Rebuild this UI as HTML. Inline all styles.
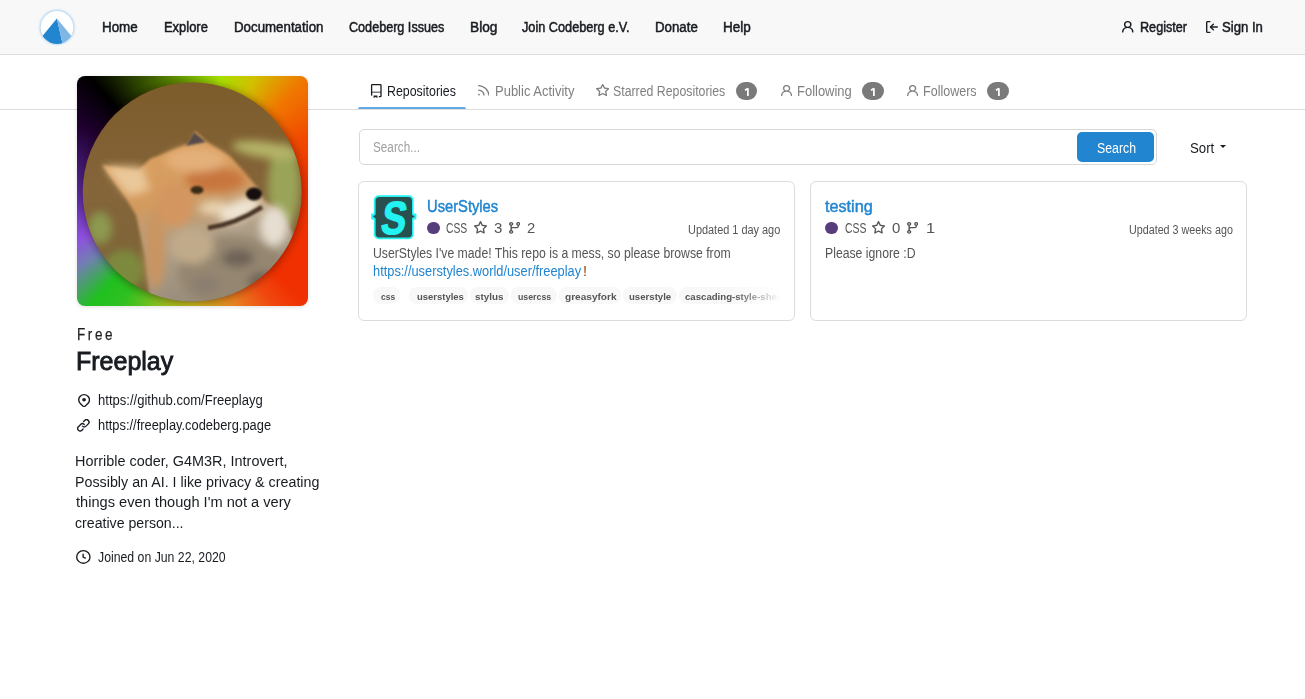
<!DOCTYPE html>
<html><head><meta charset="utf-8"><title>Freeplay - Codeberg.org</title>
<style>
html,body{margin:0;padding:0}
body{width:1305px;height:699px;position:relative;overflow:hidden;background:#fff;font-family:"Liberation Sans",sans-serif}
.t{position:absolute;white-space:nowrap;line-height:1;transform-origin:0 0}
.a{position:absolute}
</style></head><body>
<div class="a" style="left:0px;top:0px;width:1305px;height:54px;background:#f8f8f8"></div>
<div class="a" style="left:0px;top:54px;width:1305px;height:1px;background:#dedede"></div>
<svg class="a" style="left:36px;top:6px" width="42" height="42" viewBox="36 6 42 42">
<defs><clipPath id="lc"><circle cx="57" cy="27.3" r="16.6"/></clipPath>
<filter id="lb" x="-20%" y="-20%" width="140%" height="140%"><feGaussianBlur stdDeviation="0.8"/></filter></defs>
<circle cx="57" cy="27.3" r="17.3" fill="#a9cff0" filter="url(#lb)"/>
<circle cx="57" cy="27.3" r="16.3" fill="#ffffff"/>
<g clip-path="url(#lc)">
<polygon points="56.9,18.4 36,44 62.6,44" fill="#2185d0"/>
<polygon points="56.9,18.4 62.6,44 78,44" fill="#7fb6e5"/>
</g></svg>
<svg class="a" style="left:1122px;top:21.2px" width="11.50" height="11.60" viewBox="2.007 1.003 11.988 13.013" preserveAspectRatio="none"><path fill="#181c21" d="M10.561 8.073a6.005 6.005 0 0 1 3.432 5.142.75.75 0 1 1-1.498.07 4.5 4.5 0 0 0-8.99 0 .75.75 0 0 1-1.498-.07 6.004 6.004 0 0 1 3.431-5.142 3.999 3.999 0 1 1 5.123 0ZM10.5 5a2.5 2.5 0 1 0-5 0 2.5 2.5 0 0 0 5 0Z"/></svg>
<svg class="a" style="left:1205.6px;top:21.1px" width="12.00" height="12.00" viewBox="2 1 13 14" preserveAspectRatio="none"><path fill="#181c21" d="M2 2.75C2 1.784 2.784 1 3.75 1h2.5a.75.75 0 0 1 0 1.5h-2.5a.25.25 0 0 0-.25.25v10.5c0 .138.112.25.25.25h2.5a.75.75 0 0 1 0 1.5h-2.5A1.75 1.75 0 0 1 2 13.25Zm6.56 4.5h5.69a.75.75 0 0 1 0 1.5H8.56l1.97 1.97a.749.749 0 0 1-.326 1.275.749.749 0 0 1-.734-.215L6.22 8.53a.75.75 0 0 1 0-1.06l3.25-3.25a.749.749 0 0 1 1.275.326.749.749 0 0 1-.215.734Z"/></svg>
<div class="a" style="left:0px;top:109px;width:1305px;height:1px;background:#dedede"></div>
<div class="a" style="left:358px;top:107px;width:108px;height:2px;background:#62a9e3;border-radius:2px 2px 0 0"></div>
<svg class="a" style="left:370px;top:83px" width="14" height="16" viewBox="370 83 14 16">
<path d="M371.6 95.2 V85.3 Q371.6 84.6 372.3 84.6 H380.3 Q381 84.6 381 85.3 V95.9 Q381 96.6 380.3 96.6 H378.8" fill="none" stroke="#181c21" stroke-width="1.3"/>
<path d="M371.6 92.2 H381" stroke="#181c21" stroke-width="1.2" fill="none" opacity="0.7"/>
<path d="M371.6 95.5 V96" stroke="#181c21" stroke-width="1.3"/>
<path d="M373.6 95.6 H377.4 V98 L375.5 96.9 L373.6 98 Z" fill="#181c21"/>
</svg>
<svg class="a" style="left:477.8px;top:85.4px" width="11.50" height="10.50" viewBox="1.999 2.024 11.976 11.976" preserveAspectRatio="none"><path fill="#808080" d="M2.002 2.725a.75.75 0 0 1 .797-.699C8.79 2.42 13.58 7.21 13.974 13.201a.75.75 0 0 1-1.497.098 10.502 10.502 0 0 0-9.776-9.776.747.747 0 0 1-.7-.798ZM2.84 7.05h-.002a7.002 7.002 0 0 1 6.113 6.111.75.75 0 0 1-1.49.178 5.503 5.503 0 0 0-4.8-4.8.75.75 0 0 1 .179-1.489ZM2 13a1 1 0 1 1 2 0 1 1 0 0 1-2 0Z"/></svg>
<svg class="a" style="left:595.5px;top:84.3px" width="13.40" height="12.00" viewBox="0.591 0.25 14.816 14.163" preserveAspectRatio="none"><path fill="#808080" d="M8 .25a.75.75 0 0 1 .673.418l1.882 3.815 4.21.612a.75.75 0 0 1 .416 1.279l-3.046 2.97.719 4.192a.751.751 0 0 1-1.088.791L8 12.347l-3.766 1.98a.75.75 0 0 1-1.088-.79l.72-4.194L.818 6.374a.75.75 0 0 1 .416-1.28l4.21-.611L7.327.668A.75.75 0 0 1 8 .25Zm0 2.445L6.615 5.5a.75.75 0 0 1-.564.41l-3.097.45 2.24 2.184a.75.75 0 0 1 .216.664l-.528 3.084 2.769-1.456a.75.75 0 0 1 .698 0l2.77 1.456-.53-3.084a.75.75 0 0 1 .216-.664l2.24-2.183-3.096-.45a.75.75 0 0 1-.564-.41L8 2.694Z"/></svg>
<svg class="a" style="left:780.5px;top:84.8px" width="11.20" height="11.10" viewBox="2.007 1.003 11.988 13.013" preserveAspectRatio="none"><path fill="#808080" d="M10.561 8.073a6.005 6.005 0 0 1 3.432 5.142.75.75 0 1 1-1.498.07 4.5 4.5 0 0 0-8.99 0 .75.75 0 0 1-1.498-.07 6.004 6.004 0 0 1 3.431-5.142 3.999 3.999 0 1 1 5.123 0ZM10.5 5a2.5 2.5 0 1 0-5 0 2.5 2.5 0 0 0 5 0Z"/></svg>
<svg class="a" style="left:907px;top:84.8px" width="11.20" height="11.10" viewBox="2.007 1.003 11.988 13.013" preserveAspectRatio="none"><path fill="#808080" d="M10.561 8.073a6.005 6.005 0 0 1 3.432 5.142.75.75 0 1 1-1.498.07 4.5 4.5 0 0 0-8.99 0 .75.75 0 0 1-1.498-.07 6.004 6.004 0 0 1 3.431-5.142 3.999 3.999 0 1 1 5.123 0ZM10.5 5a2.5 2.5 0 1 0-5 0 2.5 2.5 0 0 0 5 0Z"/></svg>
<div class="a" style="left:736px;top:82px;width:21px;height:18px;background:#7a7a7a;border-radius:9px"></div>
<svg class="a" style="left:741.90px;top:85px" width="10" height="13" viewBox="0 0 10 13"><path d="M5.9 3.3 V10.9 M3.0 5.2 L5.9 3.4" stroke="#fff" stroke-width="1.75" fill="none" stroke-linecap="butt"/></svg>
<div class="a" style="left:862px;top:82px;width:22px;height:18px;background:#7a7a7a;border-radius:9px"></div>
<svg class="a" style="left:868.40px;top:85px" width="10" height="13" viewBox="0 0 10 13"><path d="M5.9 3.3 V10.9 M3.0 5.2 L5.9 3.4" stroke="#fff" stroke-width="1.75" fill="none" stroke-linecap="butt"/></svg>
<div class="a" style="left:987px;top:82px;width:21.7px;height:18px;background:#7a7a7a;border-radius:9px"></div>
<svg class="a" style="left:993.25px;top:85px" width="10" height="13" viewBox="0 0 10 13"><path d="M5.9 3.3 V10.9 M3.0 5.2 L5.9 3.4" stroke="#fff" stroke-width="1.75" fill="none" stroke-linecap="butt"/></svg>
<div class="a" style="left:359px;top:129px;width:798px;height:36px;box-sizing:border-box;border:1px solid #d8d8d8;border-radius:5px;background:#fff"></div>
<div class="a" style="left:1077px;top:132px;width:77px;height:30px;background:#2185d0;border-radius:5px"></div>
<div class="a" style="left:1220.2px;top:145.4px;width:0;height:0;border-left:3.4px solid transparent;border-right:3.4px solid transparent;border-top:3.9px solid #181c21"></div>
<div class="a" style="left:358px;top:181px;width:437px;height:140px;box-sizing:border-box;border:1px solid #dcdcdc;border-radius:6px;z-index:6"></div>
<div class="a" style="left:810px;top:181px;width:437px;height:140px;box-sizing:border-box;border:1px solid #dcdcdc;border-radius:6px;z-index:6"></div>
<svg class="a" style="left:370px;top:193px" width="48" height="48" viewBox="370 193 48 48">
<rect x="373.8" y="195.2" width="39.8" height="44" rx="5" fill="#22f2f2"/>
<rect x="371.2" y="213.4" width="4" height="6.2" rx="0.8" fill="#22f2f2"/>
<rect x="412.4" y="213.4" width="4" height="6.2" rx="0.8" fill="#22f2f2"/>
<rect x="375.6" y="197" width="36.4" height="40.6" rx="3.8" fill="#28504f"/>
<polygon points="372.8,216.5 376,214.6 376,218.4" fill="#28504f"/>
<polygon points="414.8,216.5 411.6,214.6 411.6,218.4" fill="#28504f"/>
<text x="392" y="234" text-anchor="middle" font-family="Liberation Sans" font-weight="700" font-size="46.5" fill="#22f2f2" stroke="#22f2f2" stroke-width="1.3" transform="translate(392 234) skewX(-9) scale(0.8 1) translate(-392 -234)">S</text>
</svg>
<div class="a" style="left:426.9px;top:221.6px;width:12.8px;height:12.8px;border-radius:50%;background:#563d7c"></div>
<div class="a" style="left:825.1px;top:221.6px;width:12.8px;height:12.8px;border-radius:50%;background:#563d7c"></div>
<svg class="a" style="left:474px;top:221.2px" width="13.00" height="12.60" viewBox="0.591 0.25 14.816 14.163" preserveAspectRatio="none"><path fill="#555555" d="M8 .25a.75.75 0 0 1 .673.418l1.882 3.815 4.21.612a.75.75 0 0 1 .416 1.279l-3.046 2.97.719 4.192a.751.751 0 0 1-1.088.791L8 12.347l-3.766 1.98a.75.75 0 0 1-1.088-.79l.72-4.194L.818 6.374a.75.75 0 0 1 .416-1.28l4.21-.611L7.327.668A.75.75 0 0 1 8 .25Zm0 2.445L6.615 5.5a.75.75 0 0 1-.564.41l-3.097.45 2.24 2.184a.75.75 0 0 1 .216.664l-.528 3.084 2.769-1.456a.75.75 0 0 1 .698 0l2.77 1.456-.53-3.084a.75.75 0 0 1 .216-.664l2.24-2.183-3.096-.45a.75.75 0 0 1-.564-.41L8 2.694Z"/></svg>
<svg class="a" style="left:872px;top:221.2px" width="13.00" height="12.60" viewBox="0.591 0.25 14.816 14.163" preserveAspectRatio="none"><path fill="#555555" d="M8 .25a.75.75 0 0 1 .673.418l1.882 3.815 4.21.612a.75.75 0 0 1 .416 1.279l-3.046 2.97.719 4.192a.751.751 0 0 1-1.088.791L8 12.347l-3.766 1.98a.75.75 0 0 1-1.088-.79l.72-4.194L.818 6.374a.75.75 0 0 1 .416-1.28l4.21-.611L7.327.668A.75.75 0 0 1 8 .25Zm0 2.445L6.615 5.5a.75.75 0 0 1-.564.41l-3.097.45 2.24 2.184a.75.75 0 0 1 .216.664l-.528 3.084 2.769-1.456a.75.75 0 0 1 .698 0l2.77 1.456-.53-3.084a.75.75 0 0 1 .216-.664l2.24-2.183-3.096-.45a.75.75 0 0 1-.564-.41L8 2.694Z"/></svg>
<svg class="a" style="left:508.8px;top:222px" width="11.40" height="11.80" viewBox="1.999 1.001 12.001 14.001" preserveAspectRatio="none"><path fill="#555555" d="M9.5 3.25a2.25 2.25 0 1 1 3 2.122V6A2.5 2.5 0 0 1 10 8.5H6a1 1 0 0 0-1 1v1.128a2.251 2.251 0 1 1-1.5 0V5.372a2.25 2.25 0 1 1 1.5 0v1.836A2.493 2.493 0 0 1 6 7h4a1 1 0 0 0 1-1v-.628A2.25 2.25 0 0 1 9.5 3.25Zm-6 0a.75.75 0 1 0 1.5 0 .75.75 0 0 0-1.5 0Zm8.25-.75a.75.75 0 1 0 0 1.5.75.75 0 0 0 0-1.5ZM4.25 12a.75.75 0 1 0 0 1.5.75.75 0 0 0 0-1.5Z"/></svg>
<svg class="a" style="left:906.8px;top:222px" width="11.40" height="11.80" viewBox="1.999 1.001 12.001 14.001" preserveAspectRatio="none"><path fill="#555555" d="M9.5 3.25a2.25 2.25 0 1 1 3 2.122V6A2.5 2.5 0 0 1 10 8.5H6a1 1 0 0 0-1 1v1.128a2.251 2.251 0 1 1-1.5 0V5.372a2.25 2.25 0 1 1 1.5 0v1.836A2.493 2.493 0 0 1 6 7h4a1 1 0 0 0 1-1v-.628A2.25 2.25 0 0 1 9.5 3.25Zm-6 0a.75.75 0 1 0 1.5 0 .75.75 0 0 0-1.5 0Zm8.25-.75a.75.75 0 1 0 0 1.5.75.75 0 0 0 0-1.5ZM4.25 12a.75.75 0 1 0 0 1.5.75.75 0 0 0 0-1.5Z"/></svg>
<div class="a" style="left:373.2px;top:287.4px;width:26.8px;height:16.6px;background:#f8f8f8;border-radius:8px"></div>
<div class="a" style="left:409.3px;top:287.4px;width:58.7px;height:16.6px;background:#f8f8f8;border-radius:8px"></div>
<div class="a" style="left:469.8px;top:287.4px;width:39.2px;height:16.6px;background:#f8f8f8;border-radius:8px"></div>
<div class="a" style="left:510.8px;top:287.4px;width:46.0px;height:16.6px;background:#f8f8f8;border-radius:8px"></div>
<div class="a" style="left:559.1px;top:287.4px;width:61.9px;height:16.6px;background:#f8f8f8;border-radius:8px"></div>
<div class="a" style="left:623px;top:287.4px;width:54px;height:16.6px;background:#f8f8f8;border-radius:8px"></div>
<div class="a" style="left:679px;top:287.4px;width:111px;height:16.6px;background:#f8f8f8;border-radius:8px"></div>
<div class="a" style="left:77px;top:76px;width:231px;height:230px;border-radius:8px;overflow:hidden;box-shadow:0 1px 4px rgba(0,0,0,0.13);background:conic-gradient(from 0deg at 50% 50%, #78b400 0deg, #a8e000 14deg, #d0c000 29deg, #f07800 45deg, #f04800 65deg, #f03000 90deg, #f03000 135deg, #f04810 145deg, #e88020 159deg, #c8c020 180deg, #a0c020 193deg, #30c020 212deg, #20c020 222deg, #7080b0 236deg, #9050e0 247deg, #6030b0 265deg, #200030 300deg, #000000 318deg, #2a4000 332deg, #609000 352deg, #78b400 360deg)">
<svg style="position:absolute;left:0;top:0" width="231" height="230" viewBox="77 76 231 230">
<defs><clipPath id="ac"><circle cx="192.2" cy="192" r="109.5"/></clipPath>
<linearGradient id="bgg" x1="0" y1="0" x2="0" y2="1"><stop offset="0" stop-color="#7c5c2a"/><stop offset="0.5" stop-color="#85653a"/><stop offset="1" stop-color="#7a6638"/></linearGradient>
<linearGradient id="fox" x1="0" y1="0" x2="0.3" y2="1"><stop offset="0" stop-color="#e0a462"/><stop offset="0.45" stop-color="#d39a5e"/><stop offset="0.7" stop-color="#b0a088"/><stop offset="1" stop-color="#9a8e7c"/></linearGradient>
<filter id="fb" x="-20%" y="-20%" width="140%" height="140%"><feGaussianBlur stdDeviation="4"/></filter>
<filter id="fb1" x="-20%" y="-20%" width="140%" height="140%"><feGaussianBlur stdDeviation="1.6"/></filter>
<filter id="fb2" x="-50%" y="-50%" width="200%" height="200%"><feGaussianBlur stdDeviation="0.9"/></filter></defs>
<circle cx="192.2" cy="193" r="110" fill="rgba(40,0,0,0.45)" filter="url(#fb)"/>
<g clip-path="url(#ac)">
<rect x="80" y="80" width="225" height="225" fill="url(#bgg)"/>
<g filter="url(#fb)">
<ellipse cx="284" cy="185" rx="16" ry="42" fill="#9aa458"/>
<ellipse cx="266" cy="150" rx="34" ry="8" fill="#b4b468" transform="rotate(8 266 150)"/>
<ellipse cx="100" cy="228" rx="12" ry="16" fill="#8c9a50"/>
<ellipse cx="124" cy="270" rx="20" ry="20" fill="#7d8a3e"/>
</g>
<g filter="url(#fb1)">
<path d="M102 165 L137 171 L150 159 L175 149 L188 144 L195 131 L207 142 L231 157 L244 172 L258 188 L264 200 L280 212 L292 232 L298 260 L280 300 L150 305 L146 260 L136 215 L125 197 Z" fill="url(#fox)"/>
</g>
<g filter="url(#fb)">
<path d="M104 166 L142 167 L150 190 L128 196 Z" fill="#eac89a"/>
<ellipse cx="215" cy="180" rx="30" ry="12" fill="#c8763c"/>
<ellipse cx="215" cy="208" rx="16" ry="7" fill="#e8d2b0"/>
<ellipse cx="175" cy="205" rx="18" ry="22" fill="#d49660"/>
<ellipse cx="196" cy="160" rx="30" ry="12" fill="#e4b07a"/>
<ellipse cx="155" cy="250" rx="10" ry="40" fill="#c99460"/>
<ellipse cx="232" cy="272" rx="54" ry="36" fill="#94866f"/>
<ellipse cx="192" cy="246" rx="22" ry="18" fill="#c0aa8a"/>
<ellipse cx="238" cy="258" rx="16" ry="9" fill="#6e6258"/>
<ellipse cx="262" cy="282" rx="14" ry="10" fill="#706458"/>
<ellipse cx="205" cy="285" rx="14" ry="9" fill="#8a7e70"/>
<ellipse cx="274" cy="226" rx="14" ry="20" fill="#e6ded0"/>
<ellipse cx="240" cy="210" rx="22" ry="10" fill="#eee4d2" transform="rotate(-25 240 210)"/>
</g>
<g filter="url(#fb2)">
<polygon points="186,146 194,132 206,142" fill="#574c4a"/>
<ellipse cx="197" cy="190" rx="6.5" ry="4" fill="#3a2a14"/>
<ellipse cx="254" cy="194" rx="8" ry="6.5" fill="#141010"/>
<path d="M208 228 Q236 224 262 207" stroke="#4a3428" stroke-width="4.5" fill="none"/>
</g>
</g></svg></div>
<svg class="a" style="left:77.6px;top:393.5px" width="12.20" height="13.50" viewBox="1.5 0.499 13.0 15.072" preserveAspectRatio="none"><path fill="#181c21" d="M12.596 11.596l-3.535 3.536a1.5 1.5 0 0 1-2.122 0l-3.535-3.536a6.5 6.5 0 1 1 9.192-9.193 6.5 6.5 0 0 1 0 9.193Zm-1.06-8.132v-.001a5 5 0 1 0-7.072 7.072L8 14.07l3.536-3.534a5 5 0 0 0 0-7.072ZM8 9a2 2 0 1 1-.001-3.999A2 2 0 0 1 8 9Z"/></svg>
<svg class="a" style="left:77.3px;top:419.2px" width="12.70" height="12.60" viewBox="0.999 0.999 14.003 14.003" preserveAspectRatio="none"><path fill="#181c21" d="m7.775 3.275 1.25-1.25a3.5 3.5 0 1 1 4.95 4.95l-2.5 2.5a3.5 3.5 0 0 1-4.95 0 .751.751 0 0 1 .018-1.042.751.751 0 0 1 1.042-.018 1.998 1.998 0 0 0 2.83 0l2.5-2.5a2.002 2.002 0 0 0-2.83-2.83l-1.25 1.25a.751.751 0 0 1-1.042-.018.751.751 0 0 1-.018-1.042Zm-4.69 9.64a1.998 1.998 0 0 0 2.83 0l1.25-1.25a.751.751 0 0 1 1.042.018.751.751 0 0 1 .018 1.042l-1.25 1.25a3.5 3.5 0 1 1-4.95-4.95l2.5-2.5a3.5 3.5 0 0 1 4.95 0 .751.751 0 0 1-.018 1.042.751.751 0 0 1-1.042.018 1.998 1.998 0 0 0-2.83 0l-2.5 2.5a1.998 1.998 0 0 0 0 2.83Z"/></svg>
<svg class="a" style="left:76px;top:550.3px" width="14.70" height="13.90" viewBox="0 0 16 16" preserveAspectRatio="none"><path fill="#181c21" d="M8 0a8 8 0 1 1 0 16A8 8 0 0 1 8 0ZM1.5 8a6.5 6.5 0 1 0 13 0 6.5 6.5 0 0 0-13 0Zm7-3.25v2.992l2.028.812a.75.75 0 0 1-.557 1.392l-2.5-1A.751.751 0 0 1 7 8.25v-3.5a.75.75 0 0 1 1.5 0Z"/></svg>
<span id="n1" class="t" style="left:102.41px;top:20.15px;font-size:14px;font-weight:400;color:#181c21;transform:scaleX(0.9566);-webkit-text-stroke:0.5px #181c21;">Home</span>
<span id="n2" class="t" style="left:163.51px;top:20.15px;font-size:14px;font-weight:400;color:#181c21;transform:scaleX(0.9236);-webkit-text-stroke:0.5px #181c21;">Explore</span>
<span id="n3" class="t" style="left:233.66px;top:20.15px;font-size:14px;font-weight:400;color:#181c21;transform:scaleX(0.9497);-webkit-text-stroke:0.5px #181c21;">Documentation</span>
<span id="n4" class="t" style="left:348.89px;top:20.15px;font-size:14px;font-weight:400;color:#181c21;transform:scaleX(0.9005);-webkit-text-stroke:0.5px #181c21;">Codeberg Issues</span>
<span id="n5" class="t" style="left:469.60px;top:20.15px;font-size:14px;font-weight:400;color:#181c21;transform:scaleX(0.9777);-webkit-text-stroke:0.5px #181c21;">Blog</span>
<span id="n6" class="t" style="left:522.29px;top:20.15px;font-size:14px;font-weight:400;color:#181c21;transform:scaleX(0.9077);-webkit-text-stroke:0.5px #181c21;">Join Codeberg e.V.</span>
<span id="n7" class="t" style="left:655.10px;top:20.15px;font-size:14px;font-weight:400;color:#181c21;transform:scaleX(0.9470);-webkit-text-stroke:0.5px #181c21;">Donate</span>
<span id="n8" class="t" style="left:723.16px;top:20.15px;font-size:14px;font-weight:400;color:#181c21;transform:scaleX(0.9652);-webkit-text-stroke:0.5px #181c21;">Help</span>
<span id="n9" class="t" style="left:1140.28px;top:20.15px;font-size:14px;font-weight:400;color:#181c21;transform:scaleX(0.9024);-webkit-text-stroke:0.5px #181c21;">Register</span>
<span id="n10" class="t" style="left:1222.31px;top:20.15px;font-size:14px;font-weight:400;color:#181c21;transform:scaleX(0.9386);-webkit-text-stroke:0.5px #181c21;">Sign In</span>
<span id="t1" class="t" style="left:387.22px;top:83.85px;font-size:14px;font-weight:400;color:#181c21;transform:scaleX(0.8849);">Repositories</span>
<span id="t2" class="t" style="left:495.22px;top:83.85px;font-size:14px;font-weight:400;color:#808080;transform:scaleX(0.9279);">Public Activity</span>
<span id="t3" class="t" style="left:613.45px;top:83.85px;font-size:14px;font-weight:400;color:#808080;transform:scaleX(0.8798);">Starred Repositories</span>
<span id="t4" class="t" style="left:797.45px;top:83.85px;font-size:14px;font-weight:400;color:#808080;transform:scaleX(0.9263);">Following</span>
<span id="t5" class="t" style="left:923.16px;top:83.85px;font-size:14px;font-weight:400;color:#808080;transform:scaleX(0.8954);">Followers</span>
<span id="s1" class="t" style="left:373.14px;top:140.35px;font-size:14px;font-weight:400;color:#a0a0a0;transform:scaleX(0.8391);">Search...</span>
<span id="s2" class="t" style="left:1096.91px;top:140.55px;font-size:14px;font-weight:400;color:#ffffff;transform:scaleX(0.8803);">Search</span>
<span id="s3" class="t" style="left:1190.11px;top:141.15px;font-size:14px;font-weight:400;color:#181c21;transform:scaleX(0.9437);">Sort</span>
<span id="c1" class="t" style="left:426.77px;top:198.65px;font-size:16px;font-weight:400;color:#2185d0;transform:scaleX(0.9197);-webkit-text-stroke:0.45px #2185d0;">UserStyles</span>
<span id="c2" class="t" style="left:446.34px;top:221.15px;font-size:14px;font-weight:400;color:#555555;transform:scaleX(0.7363);">CSS</span>
<span id="c3" class="t" style="left:493.81px;top:221.15px;font-size:14px;font-weight:400;color:#555555;transform:scaleX(1.0721);">3</span>
<span id="c4" class="t" style="left:527.23px;top:221.15px;font-size:14px;font-weight:400;color:#555555;transform:scaleX(1.0582);">2</span>
<span id="c5" class="t" style="left:688.16px;top:223.64px;font-size:12px;font-weight:400;color:#555555;transform:scaleX(0.9097);">Updated 1 day ago</span>
<span id="c6" class="t" style="left:372.72px;top:245.95px;font-size:14px;font-weight:400;color:#555555;transform:scaleX(0.8738);">UserStyles I've made! This repo is a mess, so please browse from</span>
<span id="c7" class="t" style="left:372.72px;top:264.05px;font-size:14px;font-weight:400;color:#2185d0;transform:scaleX(0.9160);">https://userstyles.world/user/freeplay</span>
<span id="c8" class="t" style="left:583.11px;top:264.05px;font-size:14px;font-weight:400;color:#555555;transform:scaleX(1.0000);">!</span>
<span id="g1" class="t" style="left:380.68px;top:292.36px;font-size:9.5px;font-weight:700;color:#555555;transform:scaleX(0.8929);">css</span>
<span id="g2" class="t" style="left:416.58px;top:292.36px;font-size:9.5px;font-weight:700;color:#555555;transform:scaleX(0.9974);">userstyles</span>
<span id="g3" class="t" style="left:475.16px;top:292.36px;font-size:9.5px;font-weight:700;color:#555555;transform:scaleX(1.0390);">stylus</span>
<span id="g4" class="t" style="left:518.04px;top:292.36px;font-size:9.5px;font-weight:700;color:#555555;transform:scaleX(0.9235);">usercss</span>
<span id="g5" class="t" style="left:565.06px;top:292.36px;font-size:9.5px;font-weight:700;color:#555555;transform:scaleX(1.0606);">greasyfork</span>
<span id="g6" class="t" style="left:628.78px;top:292.36px;font-size:9.5px;font-weight:700;color:#555555;transform:scaleX(1.0119);">userstyle</span>
<span id="g7" class="t" style="left:685.31px;top:292.36px;font-size:9.5px;font-weight:700;color:#555555;transform:scaleX(1.0119);">cascading-style-sheets</span>
<span id="d1" class="t" style="left:825.39px;top:198.65px;font-size:16px;font-weight:400;color:#2185d0;transform:scaleX(1.0104);-webkit-text-stroke:0.45px #2185d0;">testing</span>
<span id="d2" class="t" style="left:844.65px;top:221.15px;font-size:14px;font-weight:400;color:#555555;transform:scaleX(0.7430);">CSS</span>
<span id="d3" class="t" style="left:891.62px;top:221.15px;font-size:14px;font-weight:400;color:#555555;transform:scaleX(1.0731);">0</span>
<span id="d4" class="t" style="left:925.57px;top:221.15px;font-size:14px;font-weight:400;color:#555555;transform:scaleX(1.1670);">1</span>
<span id="d5" class="t" style="left:1129.43px;top:223.64px;font-size:12px;font-weight:400;color:#555555;transform:scaleX(0.8947);">Updated 3 weeks ago</span>
<span id="d6" class="t" style="left:825.33px;top:245.95px;font-size:14px;font-weight:400;color:#555555;transform:scaleX(0.8741);">Please ignore :D</span>
<span id="p1" class="t" style="left:76.57px;top:325.73px;font-size:16.5px;font-weight:400;color:#1f1f1f;transform:scaleX(0.8178);letter-spacing:3.2px;-webkit-text-stroke:0.25px #1f1f1f;">Free</span>
<span id="p2" class="t" style="left:76.07px;top:348.63px;font-size:25px;font-weight:400;color:#181c21;transform:scaleX(0.9998);-webkit-text-stroke:0.85px #181c21;">Freeplay</span>
<span id="p3" class="t" style="left:97.72px;top:393.25px;font-size:14px;font-weight:400;color:#181c21;transform:scaleX(0.9327);">https://github.com/Freeplayg</span>
<span id="p4" class="t" style="left:97.72px;top:418.35px;font-size:14px;font-weight:400;color:#181c21;transform:scaleX(0.9200);">https://freeplay.codeberg.page</span>
<span id="p5" class="t" style="left:75.16px;top:453.95px;font-size:14px;font-weight:400;color:#181c21;transform:scaleX(1.0304);">Horrible coder, G4M3R, Introvert,</span>
<span id="p6" class="t" style="left:75.16px;top:474.65px;font-size:14px;font-weight:400;color:#181c21;transform:scaleX(1.0198);">Possibly an AI. I like privacy &amp; creating</span>
<span id="p7" class="t" style="left:75.93px;top:495.15px;font-size:14px;font-weight:400;color:#181c21;transform:scaleX(1.0440);">things even though I'm not a very</span>
<span id="p8" class="t" style="left:75.26px;top:515.95px;font-size:14px;font-weight:400;color:#181c21;transform:scaleX(1.0104);">creative person...</span>
<span id="p9" class="t" style="left:98.05px;top:550.05px;font-size:14px;font-weight:400;color:#181c21;transform:scaleX(0.8768);">Joined on Jun 22, 2020</span>
<div class="a" style="left:735px;top:284px;width:59px;height:24px;z-index:5;background:linear-gradient(to right,rgba(255,255,255,0) 0,#fff 45px,#fff 100%)"></div>
</body></html>
